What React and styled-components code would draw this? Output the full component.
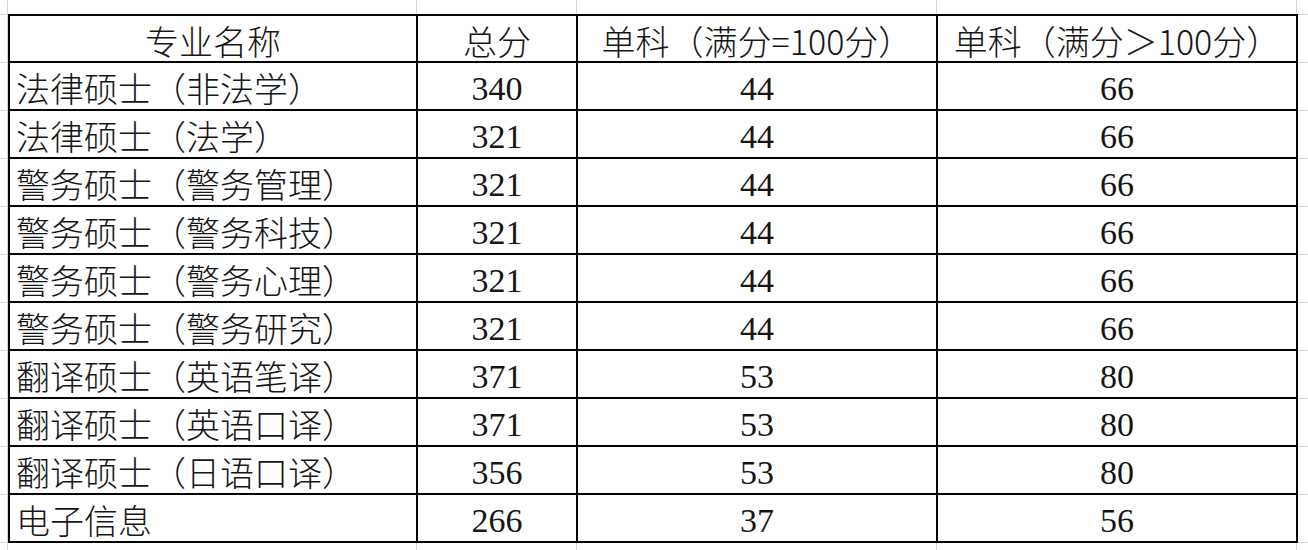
import React from "react";
import styled, { createGlobalStyle } from "styled-components";

const GlobalStyle = createGlobalStyle`
  html, body { margin: 0; padding: 0; background: #ffffff; }
  body { font-family: "Noto Sans CJK SC", "Noto Sans", sans-serif; }
`;

const GRID = "#d6d6d6";

const Sheet = styled.div`
  width: 1308px;
  height: 550px;
  box-sizing: border-box;
  padding: 14px 0 0 8px;
  overflow: hidden;
  background-color: #ffffff;
  background-image:
    linear-gradient(
      to right,
      transparent 7px, ${GRID} 7px 8px,
      transparent 8px 416px, ${GRID} 416px 417px,
      transparent 417px 576px, ${GRID} 576px 577px,
      transparent 577px 936px, ${GRID} 936px 937px,
      transparent 937px 1296px, ${GRID} 1296px 1297px,
      transparent 1297px
    ),
    repeating-linear-gradient(
      to bottom,
      ${GRID} 0 1px,
      transparent 1px 48px
    );
  background-position: 0 0, 0 14px;
`;

const Table = styled.div`
  display: grid;
  grid-template-columns: 408px 160px 360px 360px;
  grid-template-rows: 47px repeat(10, 48px);
  width: 1290px;
  box-sizing: border-box;
  border-top: 2px solid #050505;
  border-left: 2px solid #050505;
  background: #ffffff;
`;

const Cell = styled.div`
  box-sizing: border-box;
  border-right: 2px solid #050505;
  border-bottom: 2px solid #050505;
  display: flex;
  align-items: center;
  justify-content: ${(p) => (p.$align === "left" ? "flex-start" : "center")};
  padding-top: ${(p) => (p.$header ? "4px" : p.$num ? "6px" : "4px")};
  padding-left: ${(p) => (p.$align === "left" ? "6px" : "0")};
  color: #161616;
  font-size: 34px;
  line-height: 1;
  white-space: nowrap;
  text-spacing-trim: space-all;
  font-family: ${(p) =>
    p.$num
      ? '"Liberation Serif", "Times New Roman", serif'
      : '"Noto Sans CJK SC", "Noto Sans", sans-serif'};
  font-weight: ${(p) => (p.$num ? 400 : 300)};
`;

const headers = ["专业名称", "总分", "单科（满分=100分）", "单科（满分＞100分）"];

const rows = [
  ["法律硕士（非法学）", "340", "44", "66"],
  ["法律硕士（法学）", "321", "44", "66"],
  ["警务硕士（警务管理）", "321", "44", "66"],
  ["警务硕士（警务科技）", "321", "44", "66"],
  ["警务硕士（警务心理）", "321", "44", "66"],
  ["警务硕士（警务研究）", "321", "44", "66"],
  ["翻译硕士（英语笔译）", "371", "53", "80"],
  ["翻译硕士（英语口译）", "371", "53", "80"],
  ["翻译硕士（日语口译）", "356", "53", "80"],
  ["电子信息", "266", "37", "56"],
];

export default function App() {
  return (
    <>
      <GlobalStyle />
      <Sheet>
        <Table>
          {headers.map((h) => (
            <Cell key={h} $header>
              {h}
            </Cell>
          ))}
          {rows.map((r) => (
            <React.Fragment key={r[0]}>
              <Cell $align="left">{r[0]}</Cell>
              <Cell $num>{r[1]}</Cell>
              <Cell $num>{r[2]}</Cell>
              <Cell $num>{r[3]}</Cell>
            </React.Fragment>
          ))}
        </Table>
      </Sheet>
    </>
  );
}
